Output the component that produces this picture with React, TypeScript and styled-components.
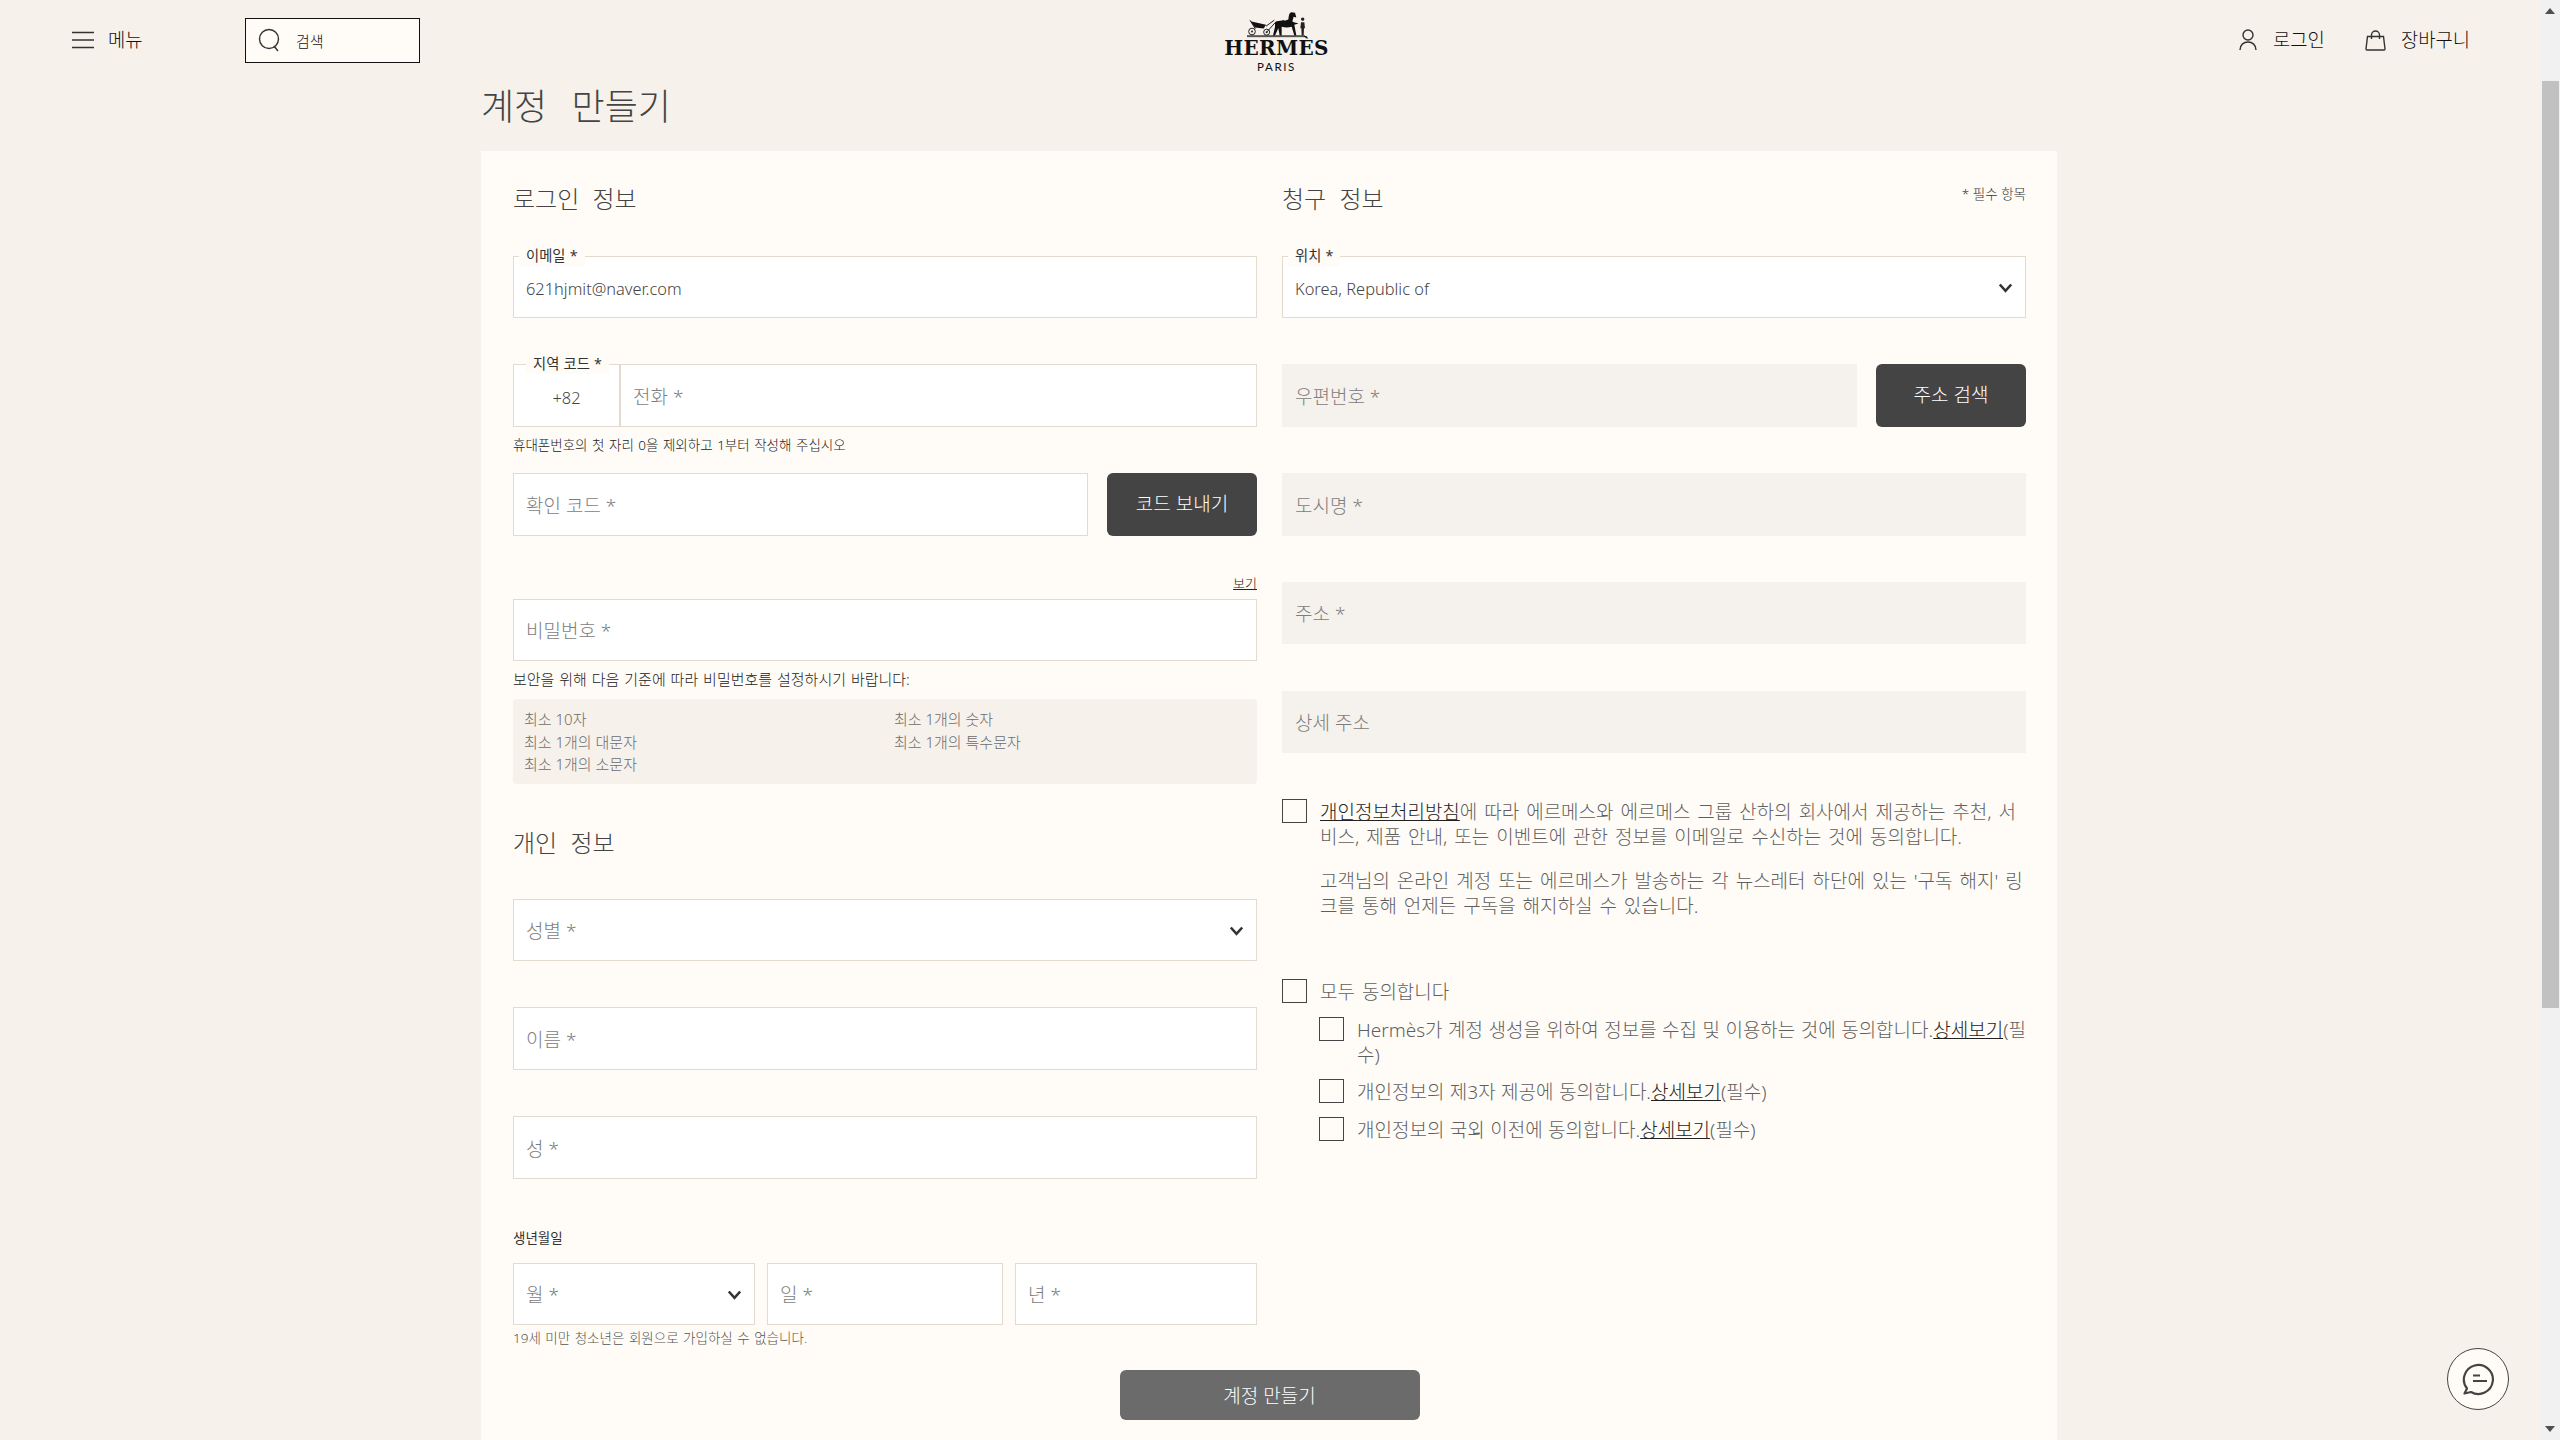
import React from "react";
import styled, { createGlobalStyle } from "styled-components";

const FONT = `"Noto Sans", "Noto Sans CJK KR", sans-serif`;

const Global = createGlobalStyle`
  html, body { margin: 0; padding: 0; height: 100%; overflow: hidden; background: #f6f1eb; }
  * { box-sizing: border-box; }
  body { font-family: ${FONT}; color: #444; }
`;

const Page = styled.div`
  display: flex;
  height: 1440px;
  width: 2560px;
  position: relative;
  overflow: hidden;
`;
const Main = styled.div`
  flex: 1;
  min-width: 0;
  display: flex;
  flex-direction: column;
`;

/* header */
const Header = styled.header`
  height: 80px;
  flex: none;
  display: grid;
  grid-template-columns: 1fr auto 1fr;
  align-items: center;
  padding: 0 70px 0 72px;
`;
const HeaderLeft = styled.div`
  display: flex;
  align-items: center;
`;
const HeaderRight = styled.div`
  display: flex;
  align-items: center;
  justify-content: flex-end;
  gap: 40px;
`;
const NavItem = styled.div<{ $gap: number }>`
  display: flex;
  align-items: center;
  gap: ${(p) => p.$gap}px;
  font-size: 18.8px;
  font-weight: 300;
  color: #111;
  line-height: 24px;
`;
const MenuItem = styled(NavItem)`
  width: 173px;
`;
const SearchBox = styled.div`
  width: 175px;
  height: 45px;
  border: 1.5px solid #111;
  background: #fffcf7;
  display: flex;
  align-items: center;
  padding-left: 12px;
  gap: 16px;
  font-size: 15px;
  font-weight: 300;
  color: #111;
`;
const Logo = styled.div`
  display: flex;
  flex-direction: column;
  align-items: center;
  margin-left: 11px;
  margin-top: 3px;
  color: #111;
`;
const LogoMain = styled.span`
  font-family: "DejaVu Serif", serif;
  font-weight: 700;
  font-size: 20px;
  line-height: 20px;
  letter-spacing: 0.3px;
`;
const LogoSub = styled.span`
  font-family: "Lato", sans-serif;
  font-size: 11.5px;
  line-height: 13px;
  letter-spacing: 1.6px;
  margin-top: 2px;
`;

const Title = styled.h1`
  margin: 2px 0 19px 481px;
  height: 50px;
  line-height: 50px;
  font-size: 36px;
  font-weight: 300;
  color: #444;
  word-spacing: 15px;
`;

/* panel */
const Panel = styled.main`
  margin-left: 481px;
  width: 1576px;
  flex: 1;
  background: #fffcf7;
  padding: 0 31px 0 32px;
`;
const Columns = styled.div`
  display: grid;
  grid-template-columns: 744px 744px;
  column-gap: 25px;
`;
const Column = styled.section`
  display: flex;
  flex-direction: column;
  min-width: 0;
`;
const HeadingRow = styled.div<{ $top: number }>`
  margin-top: ${(p) => p.$top}px;
  height: 36px;
  display: flex;
  justify-content: space-between;
`;
const Heading = styled.h2`
  margin: 1px 0 0;
  font-size: 24px;
  line-height: 36px;
  font-weight: 300;
  color: #444;
  word-spacing: 7px;
`;
const Required = styled.span`
  font-size: 13.5px;
  line-height: 28px;
  color: #333;
  font-weight: 300;
`;
const Field = styled.div<{ $top?: number; $h?: number; $fill?: boolean }>`
  position: relative;
  margin-top: ${(p) => p.$top ?? 0}px;
  height: ${(p) => p.$h ?? 62}px;
  flex: none;
  min-width: 0;
  display: flex;
  align-items: center;
  padding: 0 12px;
  background: ${(p) => (p.$fill ? "#f5f1ec" : "#fff")};
  border: 1px solid ${(p) => (p.$fill ? "#f5f1ec" : "#e4dbd0")};
`;
const GrowField = styled(Field)`
  flex: 1 1 0;
`;
const Placeholder = styled.span`
  color: #7d7d7d;
  font-size: 19px;
  font-weight: 300;
`;
const Value = styled.span`
  color: #444;
  font-size: 16.4px;
  font-weight: 300;
  margin-top: 3px;
`;
const Legend = styled.label<{ $left?: number }>`
  position: absolute;
  top: -11px;
  left: ${(p) => p.$left ?? 5}px;
  padding: 0 7px;
  height: 20px;
  line-height: 20px;
  font-size: 14.3px;
  word-spacing: 0.5px;
  font-weight: 400;
  color: #333;
  background: #fffcf7;
  white-space: nowrap;
`;
const Chevron = styled.svg`
  position: absolute;
  right: 12px;
  top: 50%;
  margin-top: -4px;
  width: 15px;
  height: 10px;
`;
const PhoneRow = styled.div`
  position: relative;
  margin-top: 46px;
  height: 63px;
  display: flex;
  border: 1px solid #e4dbd0;
  background: #fff;
`;
const PhoneCode = styled.div`
  width: 107px;
  flex: none;
  border-right: 2px solid #e4dbd0;
  display: flex;
  justify-content: center;
  align-items: center;
  padding: 4px 0 0 0;
  font-size: 16.4px;
  font-weight: 300;
  color: #444;
`;
const PhoneInput = styled.div`
  flex: 1;
  display: flex;
  align-items: center;
  padding-left: 12px;
`;
const Hint = styled.p<{ $top: number; $dark?: boolean; $size?: number }>`
  margin: ${(p) => p.$top}px 0 0;
  height: 20px;
  line-height: 20px;
  font-size: ${(p) => p.$size ?? 13.5}px;
  font-weight: 300;
  word-spacing: 1px;
  color: ${(p) => (p.$dark ? "#222" : "#555")};
  white-space: nowrap;
`;
const FieldRow = styled.div<{ $top: number; $gap: number }>`
  margin-top: ${(p) => p.$top}px;
  display: flex;
  gap: ${(p) => p.$gap}px;
`;
const DarkButton = styled.button`
  width: 150px;
  height: 63px;
  flex: none;
  border: 0;
  border-radius: 6px;
  background: #444;
  color: #fff;
  font-family: inherit;
  font-size: 19px;
  font-weight: 300;
  padding: 0 0 3px;
`;
const ShowLink = styled.a`
  margin-top: 37px;
  height: 20px;
  align-self: flex-end;
  font-size: 13px;
  line-height: 20px;
  font-weight: 300;
  color: #222;
  text-decoration: underline;
  margin-bottom: 6px;
`;
const Rules = styled.ul`
  margin: 10px 0 0;
  height: 85px;
  list-style: none;
  background: #f6f1eb;
  border-radius: 4px;
  padding: 9px 11px;
  display: grid;
  grid-template-columns: 370px 1fr;
  grid-auto-rows: 22.5px;
  font-size: 15px;
  font-weight: 300;
  color: #6d6d6d;
  line-height: 22px;
`;
const BirthLabel = styled.div`
  margin-top: 49px;
  height: 20px;
  line-height: 20px;
  font-size: 13.5px;
  font-weight: 400;
  color: #333;
`;
const DateRow = styled.div`
  margin-top: 15px;
  display: grid;
  grid-template-columns: 242px 236px 242px;
  column-gap: 12px;
`;
const Consent = styled.div<{ $top: number; $indent?: boolean }>`
  margin-top: ${(p) => p.$top}px;
  margin-left: ${(p) => (p.$indent ? 37 : 0)}px;
  display: flex;
  gap: 13px;
  align-items: flex-start;
  word-spacing: ${(p) => (p.$indent ? 0.5 : 2)}px;
`;
const Box = styled.span`
  flex: none;
  width: 25px;
  height: 24px;
  border: 1.5px solid #444;
  background: #fffcf7;
`;
const ConsentBody = styled.div`
  flex: 1;
  min-width: 0;
  padding-top: 1px;
  font-size: 19px;
  font-weight: 300;
  line-height: 25px;
  color: #5f5f5f;
  word-break: break-all;
`;
const ConsentPara = styled.p<{ $top?: number }>`
  margin: ${(p) => p.$top ?? 0}px 0 0;
`;
const Link = styled.a`
  color: #222;
  text-decoration: underline;
`;
const SubmitRow = styled.div`
  display: flex;
  justify-content: center;
  margin-top: 22px;
`;
const SubmitButton = styled.button`
  width: 300px;
  height: 50px;
  border: 0;
  border-radius: 6px;
  background: #6b6b6b;
  color: #fff;
  font-family: inherit;
  font-size: 19px;
  font-weight: 300;
`;

/* scrollbar + chat */
const Track = styled.div`
  width: 20px;
  flex: none;
  background: #f1f1f1;
  display: flex;
  flex-direction: column;
  align-items: center;
`;
const Arrow = styled.span<{ $down?: boolean }>`
  width: 0;
  height: 0;
  margin-top: ${(p) => (p.$down ? "auto" : "8px")};
  margin-bottom: ${(p) => (p.$down ? "8px" : "0")};
  border-left: 5px solid transparent;
  border-right: 5px solid transparent;
  ${(p) => (p.$down ? "border-top: 6px solid #505050;" : "border-bottom: 6px solid #505050;")}
`;
const Thumb = styled.div`
  margin-top: 67px;
  width: 17px;
  height: 927px;
  background: #c1c1c1;
`;
const Chat = styled.button`
  position: absolute;
  left: 2447px;
  top: 1348px;
  width: 62px;
  height: 62px;
  border-radius: 50%;
  border: 1px solid #444;
  background: #fffcf7;
  display: flex;
  align-items: center;
  justify-content: center;
  padding: 0;
`;

const Down = () => (
  <Chevron viewBox="0 0 15 10" aria-hidden>
    <path d="M1.8 1.5 L7.5 7.8 L13.2 1.5" fill="none" stroke="#333" strokeWidth="2.6" />
  </Chevron>
);

const Carriage = () => (
  <svg width="60" height="27" viewBox="285 25 180 80" aria-hidden>
    <rect x="288" y="97" width="174" height="6" fill="#555" />
    <g fill="none" stroke="#222" strokeWidth="3">
      <circle cx="303" cy="86" r="10" />
      <circle cx="347" cy="88" r="9" />
      <path d="M297 52l16 26M345 70l25-18" />
      <path d="M347 88L372 60" />
    </g>
    <circle cx="303" cy="86" r="3" fill="#222" />
    <circle cx="347" cy="88" r="3" fill="#222" />
    <path d="M298 55 L345 66 L338 77 L312 74 Z" fill="#111" />
    <path d="M372 58 C385 50 402 56 412 50 C414 42 412 34 420 28 L432 30 L436 44 L428 42 L424 56 C430 60 438 60 442 62 L430 66 L436 98 L430 98 L422 72 C410 76 400 74 392 72 L392 98 L386 98 L382 76 L372 98 L366 98 L372 72 Z" fill="#111" />
    <path d="M455 54 a5 5 0 1 1 .1 0 M450 58 h10 l2 18 h-3 l-1 22 h-6 l-1 -22 h-3 Z" fill="#222" />
  </svg>
);

export default function App() {
  return (
    <Page>
      <Global />
      <Main>
        <Header>
          <HeaderLeft>
            <MenuItem $gap={14}>
              <svg width="22" height="18" viewBox="0 0 22 18" aria-hidden>
                <path d="M0 1.5h22M0 9h22M0 16.5h22" stroke="#333" strokeWidth="1.5" />
              </svg>
              메뉴
            </MenuItem>
            <SearchBox>
              <svg width="22" height="24" viewBox="0 0 22 24" aria-hidden>
                <circle cx="11" cy="11" r="9.5" fill="none" stroke="#333" strokeWidth="1.4" />
                <path d="M16 18l4 5" stroke="#333" strokeWidth="1.4" />
              </svg>
              검색
            </SearchBox>
          </HeaderLeft>
          <Logo>
            <Carriage />
            <LogoMain>HERMÈS</LogoMain>
            <LogoSub>PARIS</LogoSub>
          </Logo>
          <HeaderRight>
            <NavItem $gap={16}>
              <svg width="18" height="22" viewBox="0 0 18 22" aria-hidden>
                <circle cx="9" cy="6" r="5" fill="none" stroke="#333" strokeWidth="1.4" />
                <path d="M1 21c0-5 3.5-8 8-8s8 3 8 8" fill="none" stroke="#333" strokeWidth="1.4" />
              </svg>
              로그인
            </NavItem>
            <NavItem $gap={15}>
              <svg width="21" height="21" viewBox="0 0 21 21" aria-hidden>
                <path d="M2.5 6.5h16l1.5 12.5a1 1 0 0 1-1 1H2a1 1 0 0 1-1-1z" fill="none" stroke="#333" strokeWidth="1.4" />
                <path d="M6.5 9V5a4 4 0 0 1 8 0v4" fill="none" stroke="#333" strokeWidth="1.4" />
              </svg>
              장바구니
            </NavItem>
          </HeaderRight>
        </Header>
        <Title>계정 만들기</Title>
        <Panel>
          <Columns>
            <Column>
              <HeadingRow $top={29}>
                <Heading>로그인 정보</Heading>
              </HeadingRow>
              <Field $top={40}>
                <Legend>이메일 *</Legend>
                <Value>621hjmit@naver.com</Value>
              </Field>
              <PhoneRow>
                <Legend $left={12}>지역 코드 *</Legend>
                <PhoneCode>+82</PhoneCode>
                <PhoneInput>
                  <Placeholder>전화 *</Placeholder>
                </PhoneInput>
              </PhoneRow>
              <Hint $top={8} $dark>휴대폰번호의 첫 자리 0을 제외하고 1부터 작성해 주십시오</Hint>
              <FieldRow $top={18} $gap={19}>
                <GrowField $h={63}>
                  <Placeholder>확인 코드 *</Placeholder>
                </GrowField>
                <DarkButton>코드 보내기</DarkButton>
              </FieldRow>
              <ShowLink>보기</ShowLink>
              <Field>
                <Placeholder>비밀번호 *</Placeholder>
              </Field>
              <Hint $top={8} $dark $size={15}>보안을 위해 다음 기준에 따라 비밀번호를 설정하시기 바랍니다:</Hint>
              <Rules>
                <li>최소 10자</li>
                <li>최소 1개의 숫자</li>
                <li>최소 1개의 대문자</li>
                <li>최소 1개의 특수문자</li>
                <li>최소 1개의 소문자</li>
              </Rules>
              <HeadingRow $top={40}>
                <Heading>개인 정보</Heading>
              </HeadingRow>
              <Field $top={39}>
                <Placeholder>성별 *</Placeholder>
                <Down />
              </Field>
              <Field $top={46} $h={63}>
                <Placeholder>이름 *</Placeholder>
              </Field>
              <Field $top={46} $h={63}>
                <Placeholder>성 *</Placeholder>
              </Field>
              <BirthLabel>생년월일</BirthLabel>
              <DateRow>
                <Field>
                  <Placeholder>월 *</Placeholder>
                  <Down />
                </Field>
                <Field>
                  <Placeholder>일 *</Placeholder>
                </Field>
                <Field>
                  <Placeholder>년 *</Placeholder>
                </Field>
              </DateRow>
              <Hint $top={3}>19세 미만 청소년은 회원으로 가입하실 수 없습니다.</Hint>
            </Column>
            <Column>
              <HeadingRow $top={29}>
                <Heading>청구 정보</Heading>
                <Required>* 필수 항목</Required>
              </HeadingRow>
              <Field $top={40}>
                <Legend>위치 *</Legend>
                <Value>Korea, Republic of</Value>
                <Down />
              </Field>
              <FieldRow $top={46} $gap={19}>
                <GrowField $h={63} $fill>
                  <Placeholder>우편번호 *</Placeholder>
                </GrowField>
                <DarkButton>주소 검색</DarkButton>
              </FieldRow>
              <Field $top={46} $h={63} $fill>
                <Placeholder>도시명 *</Placeholder>
              </Field>
              <Field $top={46} $h={62} $fill>
                <Placeholder>주소 *</Placeholder>
              </Field>
              <Field $top={47} $h={62} $fill>
                <Placeholder>상세 주소</Placeholder>
              </Field>
              <Consent $top={46}>
                <Box />
                <ConsentBody>
                  <ConsentPara>
                    <Link>개인정보처리방침</Link>에 따라 에르메스와 에르메스 그룹 산하의 회사에서 제공하는 추천, 서비스, 제품 안내, 또는 이벤트에 관한 정보를 이메일로 수신하는 것에 동의합니다.
                  </ConsentPara>
                  <ConsentPara $top={19}>
                    고객님의 온라인 계정 또는 에르메스가 발송하는 각 뉴스레터 하단에 있는 '구독 해지' 링크를 통해 언제든 구독을 해지하실 수 있습니다.
                  </ConsentPara>
                </ConsentBody>
              </Consent>
              <Consent $top={60}>
                <Box />
                <ConsentBody>모두 동의합니다</ConsentBody>
              </Consent>
              <Consent $top={12} $indent>
                <Box />
                <ConsentBody>
                  Hermès가 계정 생성을 위하여 정보를 수집 및 이용하는 것에 동의합니다.<Link>상세보기</Link>(필수)
                </ConsentBody>
              </Consent>
              <Consent $top={11} $indent>
                <Box />
                <ConsentBody>
                  개인정보의 제3자 제공에 동의합니다.<Link>상세보기</Link>(필수)
                </ConsentBody>
              </Consent>
              <Consent $top={12} $indent>
                <Box />
                <ConsentBody>
                  개인정보의 국외 이전에 동의합니다.<Link>상세보기</Link>(필수)
                </ConsentBody>
              </Consent>
            </Column>
          </Columns>
          <SubmitRow>
            <SubmitButton>계정 만들기</SubmitButton>
          </SubmitRow>
        </Panel>
      </Main>
      <Track>
        <Arrow />
        <Thumb />
        <Arrow $down />
      </Track>
      <Chat aria-label="chat">
        <svg width="34" height="34" viewBox="0 0 34 34" aria-hidden>
          <path d="M6 26.5 A14.5 14.5 0 1 1 10 30 L3.5 31.5 Z" fill="none" stroke="#444" strokeWidth="2.2" strokeLinejoin="round" />
          <path d="M12 13.5h7M12 19h14" stroke="#444" strokeWidth="2.2" />
        </svg>
      </Chat>
    </Page>
  );
}
